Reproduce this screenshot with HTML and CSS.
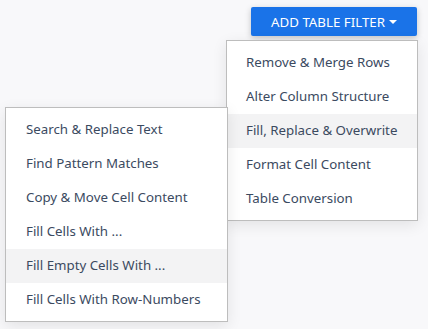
FILE: index.html
```html
<!DOCTYPE html>
<html lang="en">
<head>
  <meta charset="utf-8" />
  <title>Table Filters</title>
  <link rel="stylesheet" href="styles.css">
</head>
<body>
  <div class="stage">
    <div class="toolbar">
      <button class="btn primary">ADD TABLE FILTER <span class="caret"></span></button>
    </div>

    <ul class="menu menu-main">
      <li>Remove &amp; Merge Rows</li>
      <li>Alter Column Structure</li>
      <li class="active">Fill, Replace &amp; Overwrite</li>
      <li>Format Cell Content</li>
      <li>Table Conversion</li>
    </ul>

    <ul class="menu menu-sub">
      <li>Search &amp; Replace Text</li>
      <li>Find Pattern Matches</li>
      <li>Copy &amp; Move Cell Content</li>
      <li>Fill Cells With ...</li>
      <li class="active">Fill Empty Cells With ...</li>
      <li>Fill Cells With Row-Numbers</li>
    </ul>
  </div>
</body>
</html>
```

FILE: styles.css
```css
:root{
  --bg: #f8f8fa;
  --blue: #1a73e8;
  --text: #3b4a5f;
  --border: #bdbdbd;
  --hover: #f3f3f4;
}
html, body{ height: 100%; }
body{
  margin: 0;
  background: var(--bg);
  font-family: "Noto Sans", "Open Sans", Arial, sans-serif;
  color: var(--text);
}
.stage{ position: relative; width: 428px; height: 329px; }

.toolbar{ display: flex; justify-content: flex-end; padding: 7px 11px 0 0; }
.btn{
  border: 0; cursor: pointer; font-family: inherit;
}
.btn.primary{
  background: var(--blue); color: #fff;
  width: 166px; height: 29px;
  border-radius: 2px;
  font-size: 13.3px;
  display: flex; align-items: center; justify-content: center; gap: 4px;
  box-shadow: 0 2px 6px rgba(0,0,0,.22);
}
.caret{
  width: 0; height: 0;
  border-left: 4px solid transparent; border-right: 4px solid transparent;
  border-top: 4px solid #fff;
}

.menu{
  position: absolute; margin: 0; padding: 5px 0 4px;
  list-style: none; background: #fff;
  border: 1px solid var(--border);
  box-shadow: 0 4px 14px rgba(0,0,0,.09);
  font-size: 13.3px;
}
.menu li{ height: 34px; line-height: 32px; padding-left: 19px; white-space: nowrap; }
.menu li.active{ background: var(--hover); }

.menu-main{ left: 226px; top: 40px; width: 190px; }
.menu-sub{ left: 5px; top: 107px; width: 221px; }
.menu-sub li{ padding-left: 20px; }
```
